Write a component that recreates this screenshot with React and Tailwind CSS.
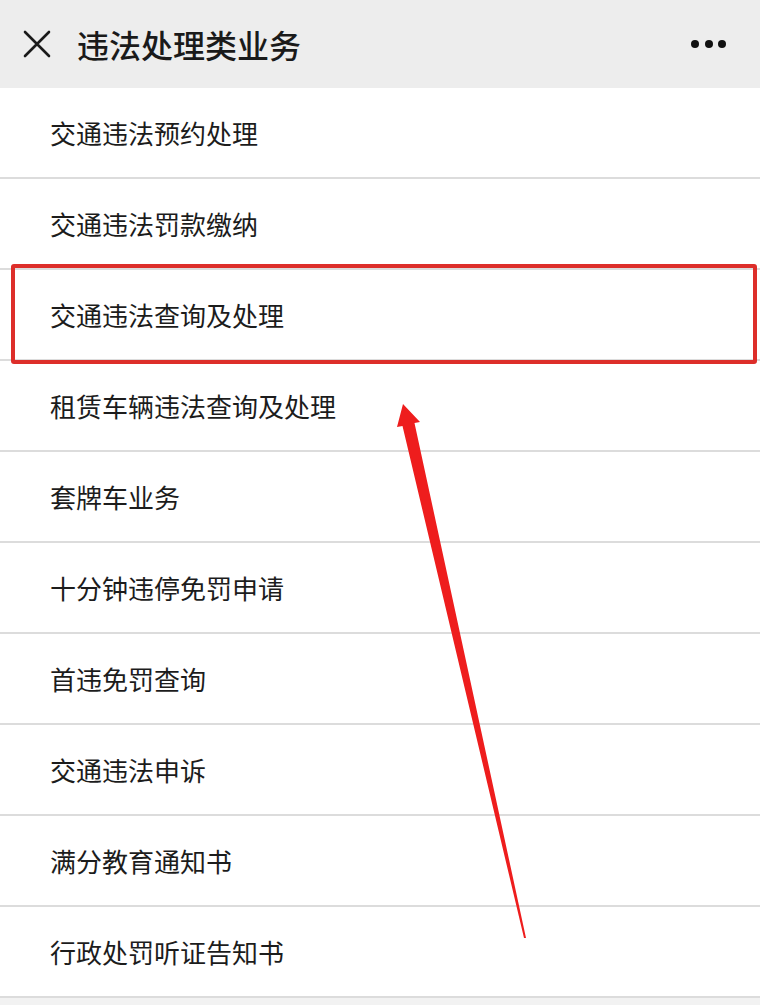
import React from 'react';

const items = [
    '交通违法预约处理',
    '交通违法罚款缴纳',
    '交通违法查询及处理',
    '租赁车辆违法查询及处理',
    '套牌车业务',
    '十分钟违停免罚申请',
    '首违免罚查询',
    '交通违法申诉',
    '满分教育通知书',
    '行政处罚听证告知书',
];

const font = { fontFamily: '"Noto Sans CJK SC", "Noto Sans", sans-serif' };

function App() {
    return (
        <div className="relative w-[760px] h-[1005px] overflow-hidden bg-[#f2f2f2]" style={font}>
            {/* Header */}
            <header className="h-[88px] bg-[#ededed] flex items-center pl-[22px] pr-[34px]">
                <svg width="30" height="30" viewBox="0 0 30 30" className="shrink-0">
                    <path d="M3 3 L27 27 M27 3 L3 27" stroke="#1a1a1a" strokeWidth="2.6" strokeLinecap="round" />
                </svg>
                <h1 className="ml-[25px] text-[32px] leading-none font-medium text-[#1a1a1a] tracking-[0px]">
                    违法处理类业务
                </h1>
                <div className="ml-auto flex items-center gap-[5.5px]">
                    <span className="w-[8px] h-[8px] rounded-full bg-[#111]" />
                    <span className="w-[8px] h-[8px] rounded-full bg-[#111]" />
                    <span className="w-[8px] h-[8px] rounded-full bg-[#111]" />
                </div>
            </header>

            {/* List */}
            <ul className="bg-white">
                {items.map((label) => (
                    <li
                        key={label}
                        className="h-[91px] border-b-2 border-[#dcdcdc] flex items-center pl-[50px] text-[26px] text-[#1c1c1c] leading-none"
                    >
                        {label}
                    </li>
                ))}
            </ul>

            {/* Highlight box */}
            <div className="absolute left-[11px] top-[264px] w-[746px] h-[100px] border-[4px] border-[#dd2e2a] rounded-[3px]" />

            {/* Arrow */}
            <svg className="absolute left-0 top-0 pointer-events-none" width="760" height="1005" viewBox="0 0 760 1005">
                <polygon
                    points="403,404 420,422 414.5,423 526,938 524,938 402.5,426 397,427"
                    fill="#ee1d1d"
                />
            </svg>
        </div>
    );
}

export default App;
